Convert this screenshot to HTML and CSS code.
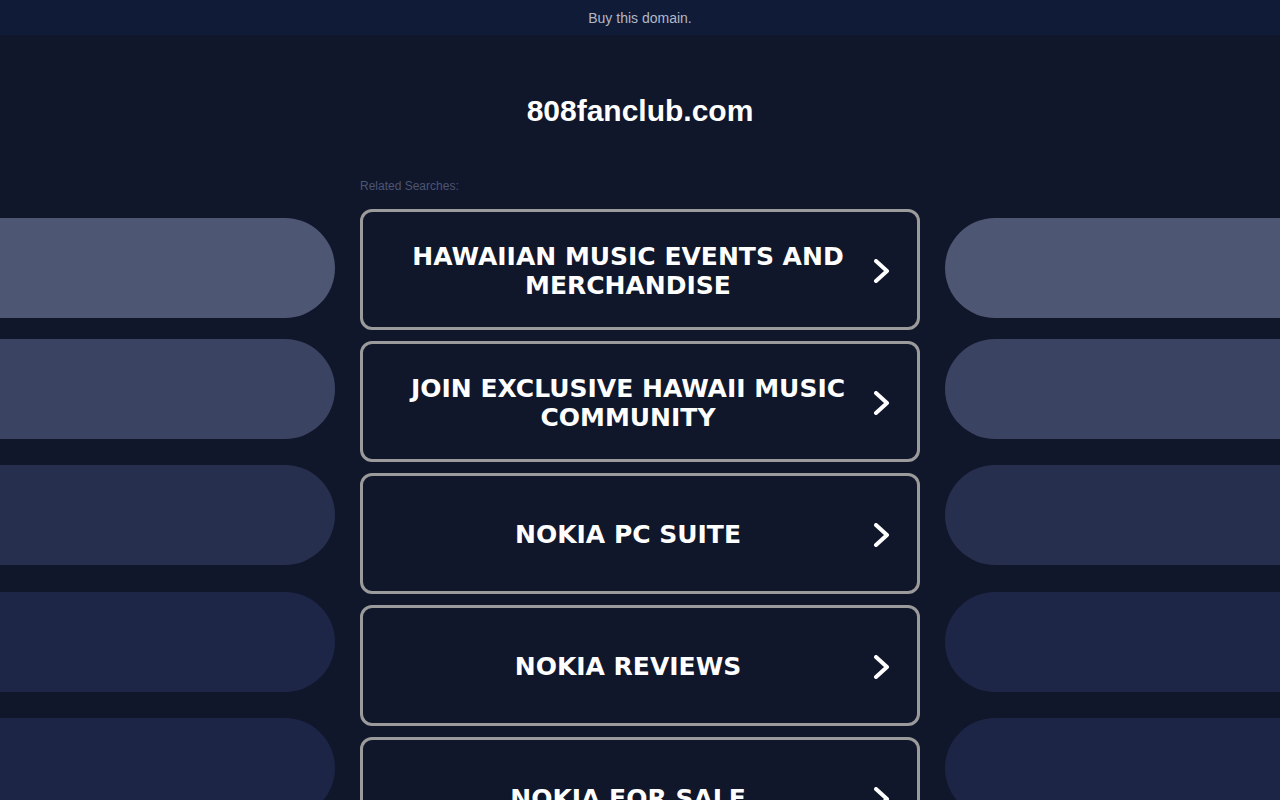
FILE: index.html
```html
<!DOCTYPE html>
<html lang='en'>

<head>
    <meta charset='UTF-8'>
    <title>808fanclub.com</title>
    <link rel="stylesheet" href="styles.css">
</head>

<body>
    <div class="topbar">
        <a href="#">Buy this domain.</a>
    </div>
    <div class="page">
        <div class="side side-left">
            <div class="pill p1"></div>
            <div class="pill p2"></div>
            <div class="pill p3"></div>
            <div class="pill p4"></div>
            <div class="pill p5"></div>
        </div>
        <div class="main">
            <h1>808fanclub.com</h1>
            <div class="caption">Related Searches:</div>
            <a class="link" href="#">
                <span class="text">HAWAIIAN MUSIC EVENTS AND MERCHANDISE</span>
                <svg class="arrow" width="24" height="24" viewBox="0 0 24 24"><path d="M7 2 L18 12 L7 22" /></svg>
            </a>
            <a class="link" href="#">
                <span class="text">JOIN EXCLUSIVE HAWAII MUSIC COMMUNITY</span>
                <svg class="arrow" width="24" height="24" viewBox="0 0 24 24"><path d="M7 2 L18 12 L7 22" /></svg>
            </a>
            <a class="link" href="#">
                <span class="text">NOKIA PC SUITE</span>
                <svg class="arrow" width="24" height="24" viewBox="0 0 24 24"><path d="M7 2 L18 12 L7 22" /></svg>
            </a>
            <a class="link" href="#">
                <span class="text">NOKIA REVIEWS</span>
                <svg class="arrow" width="24" height="24" viewBox="0 0 24 24"><path d="M7 2 L18 12 L7 22" /></svg>
            </a>
            <a class="link" href="#">
                <span class="text">NOKIA FOR SALE</span>
                <svg class="arrow" width="24" height="24" viewBox="0 0 24 24"><path d="M7 2 L18 12 L7 22" /></svg>
            </a>
        </div>
        <div class="side side-right">
            <div class="pill p1"></div>
            <div class="pill p2"></div>
            <div class="pill p3"></div>
            <div class="pill p4"></div>
            <div class="pill p5"></div>
        </div>
    </div>
</body>

</html>
```

FILE: styles.css
```css
* {
    padding: 0;
    margin: 0;
    box-sizing: border-box;
}

html, body {
    height: 100%;
    overflow: hidden;
}

body {
    background: #11172b;
    font-family: "Liberation Sans", Arial, sans-serif;
}

.topbar {
    height: 35px;
    background: #101b37;
    display: flex;
    align-items: center;
    justify-content: center;
}

.topbar a {
    color: #b2b8c6;
    font-size: 14px;
    text-decoration: none;
}

.page {
    display: grid;
    grid-template-columns: 335px 560px 335px;
    column-gap: 25px;
}

.main {
    display: flex;
    flex-direction: column;
}

h1 {
    color: #fff;
    font-size: 30px;
    font-weight: bold;
    text-align: center;
    margin-top: 57px;
    line-height: 38px;
}

.caption {
    color: #4b5574;
    font-size: 12px;
    margin-top: 49px;
    line-height: 14px;
}

.link {
    display: flex;
    align-items: center;
    height: 121px;
    margin-top: 11px;
    padding: 2px 24px 0 24px;
    border: 3px solid #9b9b9b;
    border-radius: 12px;
    text-decoration: none;
}

.caption + .link {
    margin-top: 16px;
}

.text {
    flex: 1;
    color: #fff;
    font-family: "DejaVu Sans", Verdana, sans-serif;
    font-weight: bold;
    font-size: 25px;
    line-height: 29px;
    text-align: center;
}

.arrow {
    fill: none;
    stroke: #fff;
    stroke-width: 4;
    stroke-linecap: round;
    stroke-linejoin: round;
}

.side {
    display: flex;
    flex-direction: column;
}

.pill {
    height: 100px;
    flex-shrink: 0;
}

.side-left .pill {
    border-radius: 0 50px 50px 0;
}

.side-right .pill {
    border-radius: 50px 0 0 50px;
}

.p1 {
    margin-top: 183px;
    background: #4d5673;
}

.p2 {
    margin-top: 21px;
    background: #3a4462;
}

.p3 {
    margin-top: 26px;
    background: #272f4e;
}

.p4 {
    margin-top: 27px;
    background: #1d2647;
}

.p5 {
    margin-top: 26px;
    background: #1c2546;
}
```
